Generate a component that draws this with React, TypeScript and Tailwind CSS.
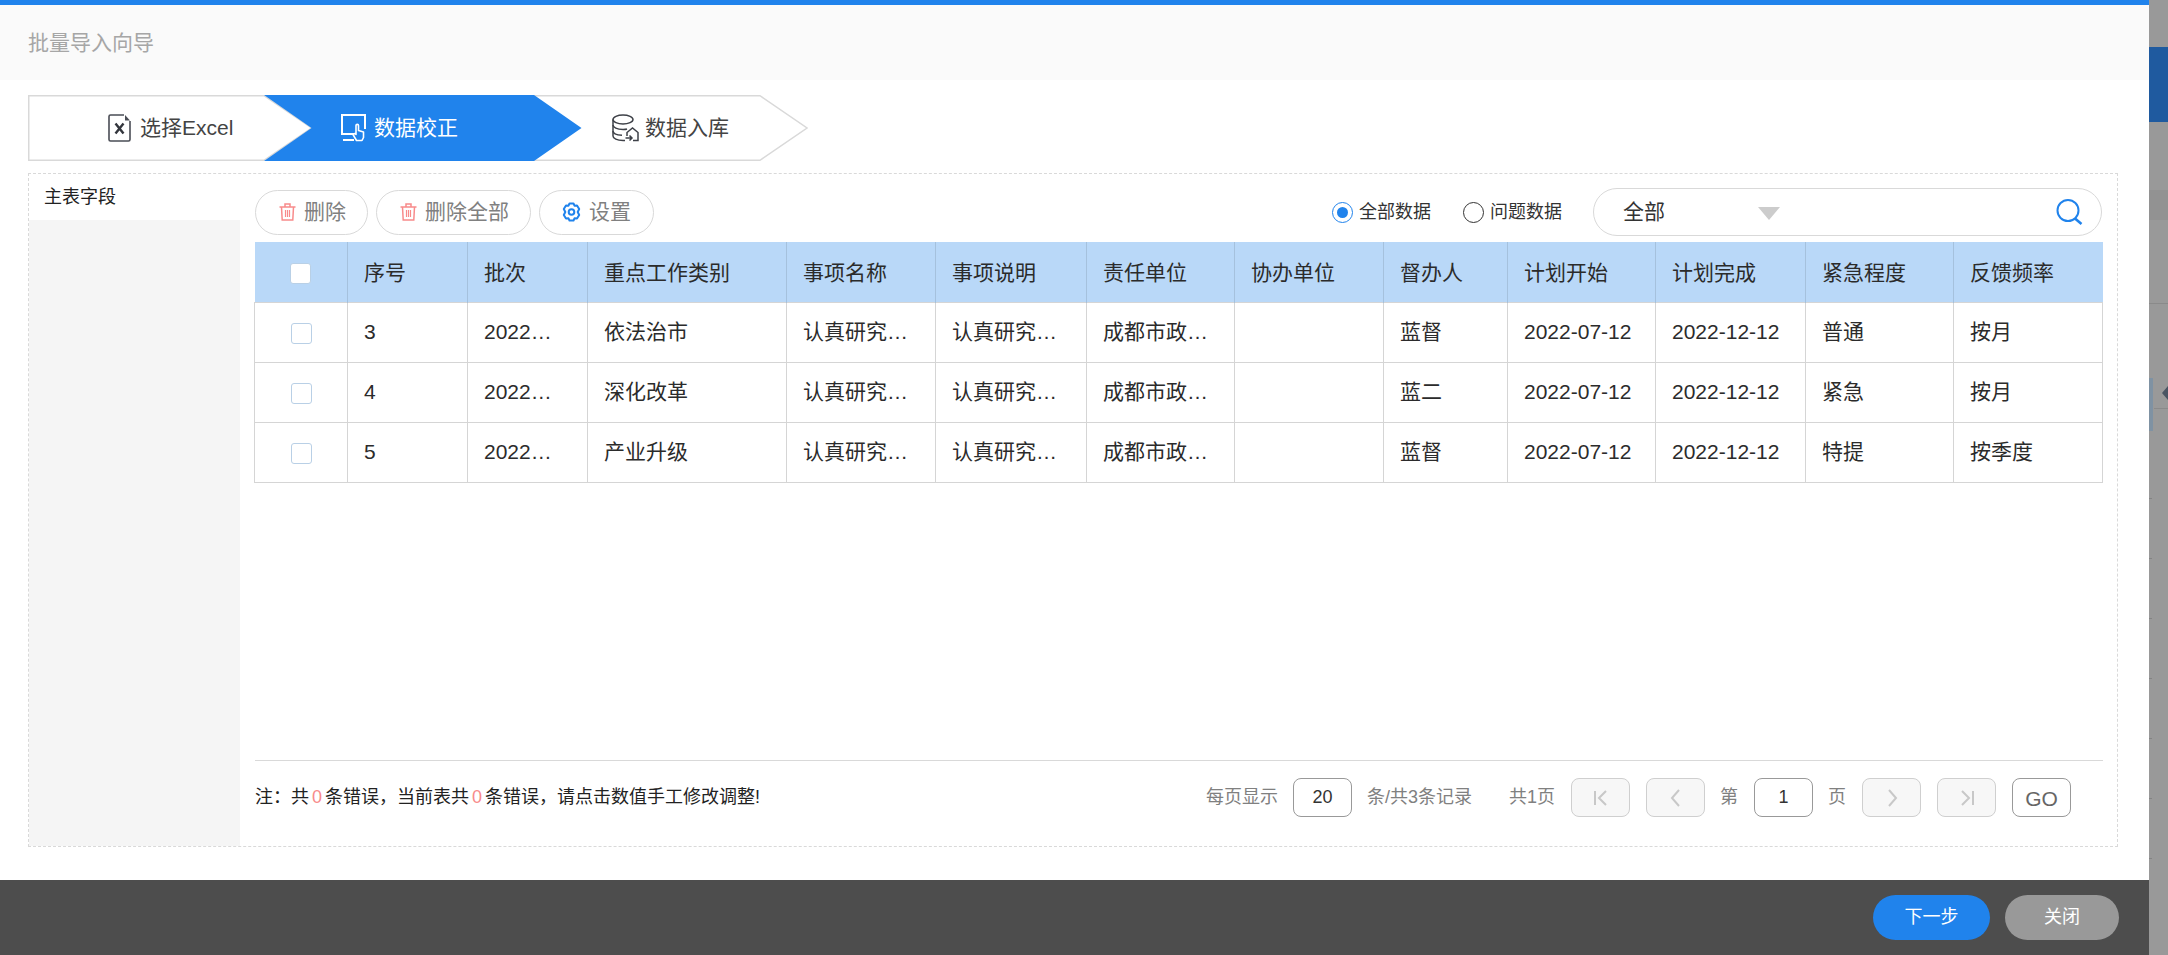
import type { ReactNode } from 'react';

const columns = [
  { title: '序号', width: 'w-[120px]' },
  { title: '批次', width: 'w-[120px]' },
  { title: '重点工作类别', width: 'w-[199px]' },
  { title: '事项名称', width: 'w-[149px]' },
  { title: '事项说明', width: 'w-[151px]' },
  { title: '责任单位', width: 'w-[148px]' },
  { title: '协办单位', width: 'w-[149px]' },
  { title: '督办人', width: 'w-[124px]' },
  { title: '计划开始', width: 'w-[148px]' },
  { title: '计划完成', width: 'w-[150px]' },
  { title: '紧急程度', width: 'w-[148px]' },
  { title: '反馈频率', width: 'w-[149px]' },
];

const rows = [
  ['3', '2022…', '依法治市', '认真研究…', '认真研究…', '成都市政…', '', '蓝督', '2022-07-12', '2022-12-12', '普通', '按月'],
  ['4', '2022…', '深化改革', '认真研究…', '认真研究…', '成都市政…', '', '蓝二', '2022-07-12', '2022-12-12', '紧急', '按月'],
  ['5', '2022…', '产业升级', '认真研究…', '认真研究…', '成都市政…', '', '蓝督', '2022-07-12', '2022-12-12', '特提', '按季度'],
];

function TrashIcon() {
  return (
    <svg width="17" height="18" viewBox="0 0 17 18" fill="none" stroke="#f88b8b" strokeWidth="1.5">
      <path d="M0.5 4H16.5M6 4V1H11V4M2.5 4L3.2 17H13.8L14.5 4" />
      <path d="M6.5 7V14M8.5 7V14M10.5 7V14" strokeWidth="1.2" />
    </svg>
  );
}

function GearIcon() {
  return (
    <svg width="19" height="20" viewBox="0 0 19 20" fill="none" stroke="#2083ec" strokeWidth="2">
      <path d="M7.5 1.5H11.5L12.5 3.7L15 3.4L17.2 7L15.7 10L17.2 13L15 16.6L12.5 16.3L11.5 18.5H7.5L6.5 16.3L4 16.6L1.8 13L3.3 10L1.8 7L4 3.4L6.5 3.7Z" strokeLinejoin="round" />
      <circle cx="9.5" cy="10" r="2.8" />
    </svg>
  );
}

function ExcelIcon() {
  return (
    <svg width="23" height="28" viewBox="0 0 23 28" fill="none" className="shrink-0">
      <path d="M16 1H2.5A1.5 1.5 0 0 0 1 2.5V25.5A1.5 1.5 0 0 0 2.5 27H20.5A1.5 1.5 0 0 0 22 25.5V7" stroke="#4a4d55" strokeWidth="1.6" />
      <path d="M17 1L22 6.5H17Z" fill="#4a4d55" />
      <path d="M7.5 9.5L15.5 19.5M15.5 9.5L7.5 19.5" stroke="#33363d" strokeWidth="2.4" />
    </svg>
  );
}

function MonitorHandIcon() {
  return (
    <svg width="25" height="28" viewBox="0 0 25 28" fill="none" className="shrink-0">
      <path d="M13 20H1V1H24V15" stroke="#fff" strokeWidth="2" />
      <path d="M2 26H13" stroke="#fff" strokeWidth="2" />
      <path d="M15 11.5C15 10 17.5 10 17.5 11.5V16.5L22.5 18V23.5L21 26.5H15.5L12 20.5L14 19.5L15 20.5Z" fill="#2083ec" stroke="#fff" strokeWidth="1.6" strokeLinejoin="round" />
    </svg>
  );
}

function DatabaseIcon() {
  return (
    <svg width="27" height="28" viewBox="0 0 27 28" fill="none" stroke="#3e4148" strokeWidth="1.5" className="shrink-0">
      <ellipse cx="11" cy="5.5" rx="10" ry="4.5" />
      <path d="M1 5.5V22C1 24.5 5 26.5 11 26.5H13" />
      <path d="M1 11C1 13.5 5 15.5 11 15.5C12.5 15.5 14 15.4 15 15M1 17C1 19.5 5 21 10 21.3" />
      <path d="M15 22V18.5L20.5 14L26 18.5V26.5H21" />
      <path d="M13.5 24H20M17.5 21.5L20 24L17.5 26.5" />
    </svg>
  );
}

function SearchIcon() {
  return (
    <svg width="27" height="26" viewBox="0 0 27 26" fill="none" stroke="#2083ec">
      <circle cx="12" cy="11.5" r="10.5" strokeWidth="2" />
      <path d="M19 19.5L25.5 25" strokeWidth="2.6" />
    </svg>
  );
}

function ToolButton({ icon, label, className }: { icon: ReactNode; label: string; className: string }) {
  return (
    <button className={`flex h-[45px] items-center gap-[8px] rounded-full border border-[#d9d9d9] bg-white text-[21px] text-[#808080] ${className}`}>
      {icon}
      {label}
    </button>
  );
}

function Radio({ label, checked }: { label: string; checked?: boolean }) {
  return (
    <label className="flex items-center gap-[6px] text-[18px] text-[#333]">
      <span className={`flex h-[21px] w-[21px] items-center justify-center rounded-full border-[1.5px] ${checked ? 'border-[#2083ec]' : 'border-[#333]'}`}>
        {checked && <span className="h-[11px] w-[11px] rounded-full bg-[#2083ec]" />}
      </span>
      {label}
    </label>
  );
}

function PageButton({ d, className }: { d: string; className: string }) {
  return (
    <button className={`flex h-[39px] w-[59px] items-center justify-center rounded-[8px] border border-[#cfcfcf] bg-[#f7f7f7] ${className}`}>
      <svg width="20" height="20" viewBox="0 0 20 20" fill="none" stroke="#c8c8c8" strokeWidth="2">
        <path d={d} />
      </svg>
    </button>
  );
}

function Checkbox() {
  return <span className="mx-auto mt-[2px] block h-[21px] w-[21px] rounded-[3px] border border-[#b9d0e6] bg-white" />;
}

function SideRail() {
  return (
    <div className="relative h-full w-[19px] bg-[#999]">
      <div className="mt-[47px] h-[75px] bg-[#1f5a9f]" />
      <div className="mt-[68px] h-[30px] bg-[#929292]" />
      <div className="mt-[83px] h-px bg-[#8a8a8a]" />
      <div className="mt-[74px] h-[53px] w-[4px] bg-[#7f92a3]" />
      <div className="mt-[67px] flex flex-col gap-[59px]">
        {[0, 1, 2, 3, 4, 5, 6].map(i => (
          <div key={i} className="h-px w-[3px] bg-[#848484]" />
        ))}
      </div>
      <div className="absolute top-[408px] right-0 left-[5px] h-px bg-[#8a8a8a]" />
      <div className="absolute top-[386px] right-0 h-0 w-0 border-y-[7px] border-r-[6px] border-y-transparent border-r-[#4b5563]" />
    </div>
  );
}

export default function App() {
  return (
    <div className="flex h-[955px] w-[2168px] overflow-hidden bg-white [font-family:'Liberation_Sans','Noto_Sans_CJK_SC',sans-serif]">
      <div className="flex w-[2149px] flex-col">
        <div className="h-[5px] bg-[#2083ec]" />
        <div className="flex h-[75px] items-center bg-[#fafafa] pl-[28px] text-[21px] text-[#a6a6a6]">批量导入向导</div>

        <div className="flex h-[800px] flex-col pt-[15px] pr-[31px] pl-[28px]">
          {/* steps */}
          <div className="relative h-[66px] w-[780px]">
            <svg width="780" height="66" viewBox="0 0 780 66" className="absolute inset-0">
              <path d="M0.75 0.75H236L283.5 33L236 65.25H0.75Z" fill="#fff" stroke="#d9d9d9" strokeWidth="1.5" />
              <path d="M506 0.75H732L779 33L732 65.25H506" fill="#fff" stroke="#d9d9d9" strokeWidth="1.5" />
              <path d="M236 0H506L553.5 33L506 66H236L283.5 33Z" fill="#2083ec" />
            </svg>
            <div className="relative flex h-full items-center text-[21px]">
              <div className="flex w-[233px] items-center gap-[9px] pl-[80px] text-[#444]">
                <ExcelIcon />
                选择Excel
              </div>
              <div className="flex w-[271px] items-center gap-[8px] pl-[80px] text-white">
                <MonitorHandIcon />
                数据校正
              </div>
              <div className="flex items-center gap-[6px] pl-[80px] text-[#444]">
                <DatabaseIcon />
                数据入库
              </div>
            </div>
          </div>

          {/* panel */}
          <div className="mt-[12px] flex h-[674px] border border-dashed border-[#d9d9d9]">
            <div className="flex w-[211px] shrink-0 flex-col">
              <div className="flex h-[46px] items-center pl-[15px] text-[18px] text-[#222]">主表字段</div>
              <div className="flex-1 bg-[#f5f5f5]" />
            </div>

            <div className="flex min-w-0 flex-1 flex-col pt-[14px] pr-[14px] pl-[15px]">
              <div className="flex h-[48px] items-center justify-between">
                <div className="flex items-center gap-[8px]">
                  <ToolButton icon={<TrashIcon />} label="删除" className="pr-[21px] pl-[23px]" />
                  <ToolButton icon={<TrashIcon />} label="删除全部" className="pr-[21px] pl-[23px]" />
                  <ToolButton icon={<GearIcon />} label="设置" className="pr-[22px] pl-[22px]" />
                </div>
                <div className="mr-[1px] flex items-center">
                  <div className="mr-[1px]">
                    <Radio label="全部数据" checked />
                  </div>
                  <div className="ml-[31px]">
                    <Radio label="问题数据" />
                  </div>
                  <div className="ml-[31px] flex h-[48px] w-[509px] items-center rounded-full border border-[#d9d9d9] pr-[18px] pl-[29px] text-[21px] text-[#333]">
                    全部
                    <span className="mt-[2px] ml-[93px] h-0 w-0 border-x-[11px] border-t-[13px] border-x-transparent border-t-[#cccccc]" />
                    <span className="ml-auto flex">
                      <SearchIcon />
                    </span>
                  </div>
                </div>
              </div>

              <div className="mt-[6px] flex-1">
                <table className="-ml-px w-[1848px] table-fixed border-collapse text-left text-[21px] text-[#2b2b2b]">
                  <colgroup>
                    <col className="w-[93px]" />
                    {columns.map(c => (
                      <col key={c.title} className={c.width} />
                    ))}
                  </colgroup>
                  <thead>
                    <tr className="h-[60px] bg-[#b9d8f8]">
                      <th className="border-r border-[#a5c1dd] pt-[2px]">
                        <Checkbox />
                      </th>
                      {columns.map((c, i) => (
                        <th
                          key={c.title}
                          className={`px-[16px] pt-[2px] font-normal ${i < columns.length - 1 ? 'border-r border-[#a5c1dd]' : ''}`}
                        >
                          {c.title}
                        </th>
                      ))}
                    </tr>
                  </thead>
                  <tbody>
                    {rows.map(row => (
                      <tr key={row[0]} className="h-[60px]">
                        <td className="border border-[#d5d5d5]">
                          <Checkbox />
                        </td>
                        {row.map((cell, i) => (
                          <td key={i} className="border border-[#d5d5d5] px-[16px]">
                            {cell}
                          </td>
                        ))}
                      </tr>
                    ))}
                  </tbody>
                </table>
              </div>

              <div className="flex h-[86px] items-start justify-between border-t border-[#d9d9d9] pt-[17px]">
                <div className="flex h-[39px] items-center text-[18px] text-[#222]">
                  {'注\uFF1A共'}
                  <span className="mx-[3px] text-[#f88b8b]">0</span>
                  {'条错误\uFF0C当前表共'}
                  <span className="mx-[3px] text-[#f88b8b]">0</span>
                  {'条错误\uFF0C请点击数值手工修改调整!'}
                </div>
                <div className="flex items-center pr-[32px] text-[18px] text-[#808080]">
                  每页显示
                  <span className="ml-[15px] flex h-[39px] w-[59px] items-center justify-center rounded-[8px] border border-[#999] text-[#333]">20</span>
                  <span className="ml-[15px]">条/共3条记录</span>
                  <span className="ml-[37px]">共1页</span>
                  <PageButton d="M4 3V17M15 3L8 10L15 17" className="ml-[16px]" />
                  <PageButton d="M13 2L6 10L13 18" className="ml-[16px]" />
                  <span className="ml-[15px]">第</span>
                  <span className="ml-[16px] flex h-[39px] w-[59px] items-center justify-center rounded-[8px] border border-[#999] text-[#333]">1</span>
                  <span className="ml-[15px]">页</span>
                  <PageButton d="M7 2L14 10L7 18" className="ml-[16px]" />
                  <PageButton d="M16 3V17M5 3L12 10L5 17" className="ml-[16px]" />
                  <button className="ml-[16px] flex h-[39px] w-[59px] items-center justify-center rounded-[8px] border border-[#999] pt-[3px] text-[21px] text-[#666]">GO</button>
                </div>
              </div>
            </div>
          </div>
        </div>

        <div className="flex h-[75px] items-center justify-end gap-[15px] bg-[#4d4d4d] pr-[30px] text-[18px] text-white">
          <button className="h-[45px] w-[117px] rounded-full bg-[#2083ec]">下一步</button>
          <button className="h-[45px] w-[114px] rounded-full bg-[#999]">关闭</button>
        </div>
      </div>
      <SideRail />
    </div>
  );
}
